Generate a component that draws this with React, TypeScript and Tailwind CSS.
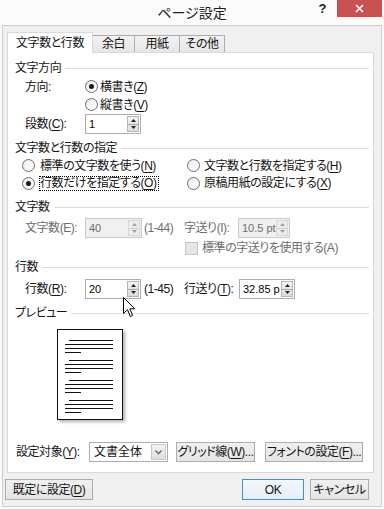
import React from "react";

const U = ({ c }: { c: string }) => <span className="underline decoration-1 underline-offset-[2px]">{c}</span>;

function Radio({ checked = false }: { checked?: boolean }) {
  return (
    <span className="flex h-[13px] w-[13px] shrink-0 items-center justify-center rounded-full border border-[#6e6e6e] bg-gradient-to-br from-[#ececec] to-white">
      {checked && <span className="h-[5px] w-[5px] rounded-full bg-[#1a1a1a]" />}
    </span>
  );
}

function SpinArrows({ disabled = false }: { disabled?: boolean }) {
  const c = disabled ? "#a0a0a0" : "#222";
  return (
    <span
      className={`mr-[1px] flex h-[16px] w-[12px] shrink-0 flex-col border ${
        disabled ? "border-[#d8d8d8] bg-[#ededed]" : "border-[#b5b5b5] bg-gradient-to-b from-[#f4f4f4] to-[#dcdcdc]"
      }`}
    >
      <span className="flex flex-1 items-center justify-center">
        <svg width="5" height="3" viewBox="0 0 5 3">
          <path d="M2.5 0 L5 3 L0 3 Z" fill={c} />
        </svg>
      </span>
      <span className={`h-px w-full ${disabled ? "bg-[#d0d0d0]" : "bg-[#a8a8a8]"}`} />
      <span className="flex flex-1 items-center justify-center">
        <svg width="5" height="3" viewBox="0 0 5 3">
          <path d="M0 0 L5 0 L2.5 3 Z" fill={c} />
        </svg>
      </span>
    </span>
  );
}

function Spin({ value, w, disabled = false }: { value: string; w: string; disabled?: boolean }) {
  return (
    <div
      className={`flex h-[20px] shrink-0 items-center border ${w} ${
        disabled ? "border-[#cccccc] bg-[#f0f0f0] text-[#6d6d6d]" : "border-[#abadb3] bg-white text-black"
      }`}
    >
      <span className="flex-1 overflow-hidden whitespace-nowrap pl-[3px] text-[11px] tracking-normal">{value}</span>
      <SpinArrows disabled={disabled} />
    </div>
  );
}

function Heading({ children, className = "" }: { children: React.ReactNode; className?: string }) {
  return (
    <div className={`flex h-[18px] shrink-0 items-center gap-[4px] ${className}`}>
      <span className="whitespace-nowrap">{children}</span>
      <div className="h-px flex-1 bg-[#dcdcdc]" />
    </div>
  );
}

function Btn({ children, cls, focus = false }: { children: React.ReactNode; cls: string; focus?: boolean }) {
  return (
    <div
      className={`flex shrink-0 items-center justify-center whitespace-nowrap border ${cls} ${
        focus
          ? "border-[#3c8fd8] bg-gradient-to-b from-[#f4f8fc] to-[#e6eef7]"
          : "border-[#acacac] bg-gradient-to-b from-[#f0f0f0] to-[#e5e5e5]"
      }`}
    >
      {children}
    </div>
  );
}

function Para() {
  return (
    <div className="flex flex-col gap-[3px]">
      <div className="ml-[4px] h-px w-[44px] bg-[#111]" />
      <div className="h-px w-[48px] bg-[#111]" />
      <div className="h-px w-[48px] bg-[#111]" />
      <div className="h-px w-[16px] bg-[#111]" />
    </div>
  );
}

export default function App() {
  return (
    <div className="relative h-[509px] w-[384px] overflow-hidden whitespace-nowrap bg-[#fbfbfb] font-['Liberation_Sans','Noto_Sans_CJK_JP',sans-serif] text-[12px] leading-[16px] tracking-[-0.45px] text-[#151515] [font-feature-settings:'palt']">
      {/* Title bar */}
      <div className="grid h-[25px] grid-cols-[1fr_auto_1fr] items-start">
        <div />
        <div className="pt-[3px] text-[14px] leading-[20px] tracking-normal text-[#1e1e1e]">ページ設定</div>
        <div className="flex items-start justify-end pr-[2px]">
          <span className="mr-[11px] mt-[2px] text-[13px] font-bold leading-[14px] text-[#222]">?</span>
          <div className="flex h-[17px] w-[45px] items-center justify-center bg-[#c75050]">
            <svg width="9" height="9" viewBox="0 0 9 9">
              <path d="M1 1 L8 8 M8 1 L1 8" stroke="white" strokeWidth="1.7" />
            </svg>
          </div>
        </div>
      </div>

      {/* Client area */}
      <div className="mx-[2px] flex h-[482px] flex-col border border-[#cfcfcf] bg-[#f0f0f0]">
        {/* Tabs */}
        <div className="mt-[6px] flex h-[20px] items-end pl-[4px]">
          <div className="relative z-10 -mb-px flex h-[21px] w-[86px] items-center justify-center border border-b-0 border-[#d9d9d9] bg-white">
            文字数と行数
          </div>
          <div className="flex h-[17px] w-[42px] items-center justify-center border-t border-r border-[#acacac] bg-gradient-to-b from-[#f2f2f2] to-[#e6e6e6]">
            余白
          </div>
          <div className="flex h-[17px] w-[45px] items-center justify-center border-t border-r border-[#acacac] bg-gradient-to-b from-[#f2f2f2] to-[#e6e6e6]">
            用紙
          </div>
          <div className="flex h-[17px] w-[45px] items-center justify-center border-t border-r border-[#acacac] bg-gradient-to-b from-[#f2f2f2] to-[#e6e6e6]">
            その他
          </div>
        </div>

        {/* Panel */}
        <div className="ml-[4px] flex h-[421px] w-[367px] flex-col border border-[#d9d9d9] bg-white pl-[7px] pr-[4px] pt-[6px]">
          <Heading>文字方向</Heading>
          <div className="flex h-[19px] items-center pl-[10px]">
            <span className="w-[60px]">方向:</span>
            <Radio checked />
            <span className="ml-[2px]">
              横書き(<U c="Z" />)
            </span>
          </div>
          <div className="flex h-[17px] items-center pl-[70px]">
            <Radio />
            <span className="ml-[2px]">
              縦書き(<U c="V" />)
            </span>
          </div>
          <div className="flex h-[22px] items-center pl-[10px]">
            <span className="w-[60px]">
              段数(<U c="C" />):
            </span>
            <Spin value="1" w="w-[56px]" />
          </div>

          <Heading className="mt-[4px]">文字数と行数の指定</Heading>
          <div className="flex h-[17px] items-center pl-[7px]">
            <div className="flex w-[165px] shrink-0 items-center">
              <Radio />
              <span className="ml-[4px] border border-transparent pr-[1px] leading-[14px]">
                標準の文字数を使う(<U c="N" />)
              </span>
            </div>
            <Radio />
            <span className="ml-[3px] border border-transparent leading-[14px]">
              文字数と行数を指定する(<U c="H" />)
            </span>
          </div>
          <div className="flex h-[18px] items-center pl-[7px]">
            <div className="flex w-[165px] shrink-0 items-center">
              <Radio checked />
              <span className="ml-[4px] border border-dotted border-black pr-[1px] leading-[13px]">
                行数だけを指定する(<U c="O" />)
              </span>
            </div>
            <Radio />
            <span className="ml-[3px] border border-transparent leading-[14px]">
              原稿用紙の設定にする(<U c="X" />)
            </span>
          </div>

          <Heading className="mt-[6px]">文字数</Heading>
          <div className="mt-[1px] flex h-[22px] items-center pl-[10px] text-[#6d6d6d]">
            <span className="w-[60px]">文字数(E):</span>
            <Spin value="40" w="w-[57px]" disabled />
            <span className="ml-[2px] w-[40px]">(1-44)</span>
            <span className="w-[54px]">字送り(I):</span>
            <Spin value="10.5 pt" w="w-[52px]" disabled />
          </div>
          <div className="flex h-[18px] items-center pl-[170px] text-[#6d6d6d]">
            <span className="h-[13px] w-[13px] shrink-0 border border-[#c4c4c4] bg-[#e6e6e6]" />
            <span className="ml-[4px]">標準の字送りを使用する(A)</span>
          </div>

          <Heading className="mt-[1px]">行数</Heading>
          <div className="mt-[2px] flex h-[22px] items-center pl-[10px]">
            <span className="w-[60px]">
              行数(<U c="R" />):
            </span>
            <Spin value="20" w="w-[56px]" />
            <span className="ml-[3px] w-[40px]">(1-45)</span>
            <span className="w-[55px]">
              行送り(<U c="T" />):
            </span>
            <Spin value="32.85 p" w="w-[56px]" />
          </div>

          <Heading className="mt-[4px]">プレビュー</Heading>
          <div className="ml-[42px] mt-[7px] flex h-[91px] w-[66px] flex-col gap-[7px] border border-[#111] bg-white pl-[7px] pt-[10px] shadow-[2px_2px_3px_rgba(0,0,0,0.3)]">
            <Para />
            <Para />
            <Para />
            <Para />
          </div>

          <div className="ml-[1px] mt-[21px] flex h-[22px] items-center">
            <span className="w-[73px]">
              設定対象(<U c="Y" />):
            </span>
            <div className="flex h-[20px] w-[79px] items-stretch border border-[#abadb3] bg-white">
              <span className="flex flex-1 items-center pl-[4px] tracking-normal">文書全体</span>
              <span className="m-[1px] flex w-[15px] items-center justify-center border border-[#c8c8c8] bg-gradient-to-b from-[#f2f2f2] to-[#dedede]">
                <svg width="7" height="5" viewBox="0 0 7 5">
                  <path d="M0.5 0.5 L3.5 3.8 L6.5 0.5" stroke="#666" fill="none" strokeWidth="1.3" />
                </svg>
              </span>
            </div>
            <Btn cls="ml-[8px] h-[20px] w-[79px]">
              グリッド線(<U c="W" />)...
            </Btn>
            <Btn cls="ml-[10px] h-[20px] w-[98px]">
              フォントの設定(<U c="F" />)...
            </Btn>
          </div>
        </div>

        {/* Bottom buttons */}
        <div className="mt-[6px] flex h-[21px] pl-[2px] pr-[12px]">
          <Btn cls="h-[21px] w-[88px]">
            既定に設定(<U c="D" />)
          </Btn>
          <div className="ml-auto flex gap-[6px]">
            <Btn cls="h-[21px] w-[62px]" focus>
              OK
            </Btn>
            <Btn cls="h-[21px] w-[59px]">キャンセル</Btn>
          </div>
        </div>
      </div>

      {/* Mouse cursor */}
      <svg className="absolute left-[123px] top-[297px]" width="13" height="21" viewBox="0 0 13 21">
        <path
          d="M0.5 0.5 L0.5 16.5 L4.5 12.7 L7.3 19.5 L9.6 18.5 L6.9 11.8 L11.8 11.8 Z"
          fill="white"
          stroke="black"
          strokeWidth="1"
          strokeLinejoin="miter"
        />
      </svg>
    </div>
  );
}
